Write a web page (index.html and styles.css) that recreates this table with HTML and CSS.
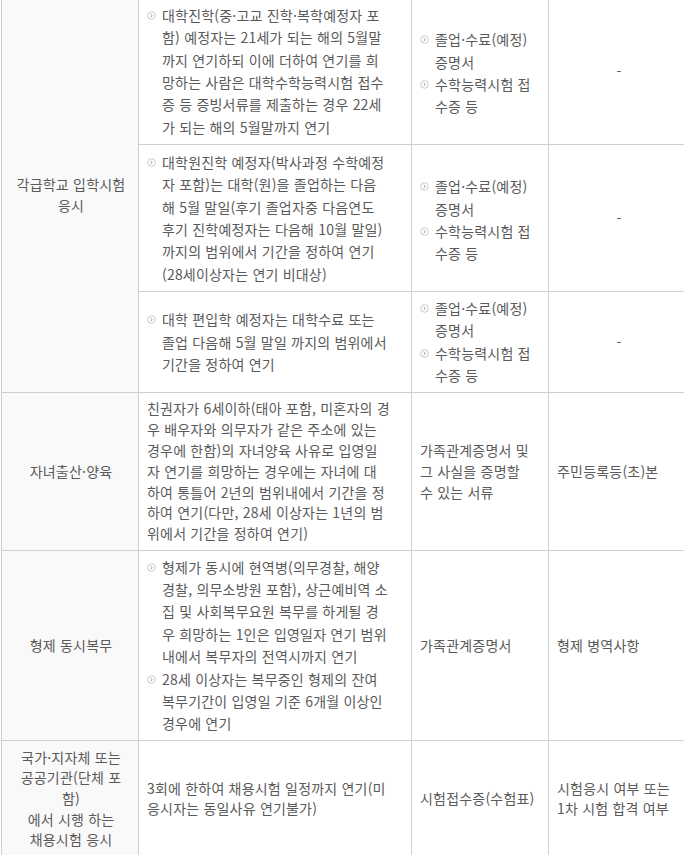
FILE: index.html
```html
<!DOCTYPE html>
<html lang="ko">
<head>
<meta charset="utf-8">
<title>입영일자 연기</title>
<link rel="stylesheet" href="styles.css">
</head>
<body>
<table class="tbl">
  <colgroup>
    <col class="c1"><col class="c2"><col class="c3"><col class="c4">
  </colgroup>
  <tbody>
    <tr class="r1">
      <th rowspan="3">각급학교 입학시험<br>응시</th>
      <td>
        <ul class="blist">
          <li><svg class="bul" viewBox="0 0 9 9"><circle cx="4.5" cy="4.5" r="3.8"/><path d="M3.7 3 L5.3 4.5 L3.7 6"/></svg>대학진학(중·고교 진학·복학예정자 포<br>함) 예정자는 21세가 되는 해의 5월말<br>까지 연기하되 이에 더하여 연기를 희<br>망하는 사람은 대학수학능력시험 접수<br>증 등 증빙서류를 제출하는 경우 22세<br>가 되는 해의 5월말까지 연기</li>
        </ul>
      </td>
      <td class="docs">
        <ul class="blist">
          <li><svg class="bul" viewBox="0 0 9 9"><circle cx="4.5" cy="4.5" r="3.8"/><path d="M3.7 3 L5.3 4.5 L3.7 6"/></svg>졸업·수료(예정)<br>증명서</li>
          <li><svg class="bul" viewBox="0 0 9 9"><circle cx="4.5" cy="4.5" r="3.8"/><path d="M3.7 3 L5.3 4.5 L3.7 6"/></svg>수학능력시험 접<br>수증 등</li>
        </ul>
      </td>
      <td class="center">-</td>
    </tr>
    <tr class="r2">
      <td>
        <ul class="blist">
          <li><svg class="bul" viewBox="0 0 9 9"><circle cx="4.5" cy="4.5" r="3.8"/><path d="M3.7 3 L5.3 4.5 L3.7 6"/></svg>대학원진학 예정자(박사과정 수학예정<br>자 포함)는 대학(원)을 졸업하는 다음<br>해 5월 말일(후기 졸업자중 다음연도<br>후기 진학예정자는 다음해 10월 말일)<br>까지의 범위에서 기간을 정하여 연기<br>(28세이상자는 연기 비대상)</li>
        </ul>
      </td>
      <td class="docs">
        <ul class="blist">
          <li><svg class="bul" viewBox="0 0 9 9"><circle cx="4.5" cy="4.5" r="3.8"/><path d="M3.7 3 L5.3 4.5 L3.7 6"/></svg>졸업·수료(예정)<br>증명서</li>
          <li><svg class="bul" viewBox="0 0 9 9"><circle cx="4.5" cy="4.5" r="3.8"/><path d="M3.7 3 L5.3 4.5 L3.7 6"/></svg>수학능력시험 접<br>수증 등</li>
        </ul>
      </td>
      <td class="center">-</td>
    </tr>
    <tr class="r3">
      <td>
        <ul class="blist">
          <li><svg class="bul" viewBox="0 0 9 9"><circle cx="4.5" cy="4.5" r="3.8"/><path d="M3.7 3 L5.3 4.5 L3.7 6"/></svg>대학 편입학 예정자는 대학수료 또는<br>졸업 다음해 5월 말일 까지의 범위에서<br>기간을 정하여 연기</li>
        </ul>
      </td>
      <td>
        <ul class="blist">
          <li><svg class="bul" viewBox="0 0 9 9"><circle cx="4.5" cy="4.5" r="3.8"/><path d="M3.7 3 L5.3 4.5 L3.7 6"/></svg>졸업·수료(예정)<br>증명서</li>
          <li><svg class="bul" viewBox="0 0 9 9"><circle cx="4.5" cy="4.5" r="3.8"/><path d="M3.7 3 L5.3 4.5 L3.7 6"/></svg>수학능력시험 접<br>수증 등</li>
        </ul>
      </td>
      <td class="center">-</td>
    </tr>
    <tr class="r4">
      <th>자녀출산·양육</th>
      <td class="plain">친권자가 6세이하(태아 포함, 미혼자의 경<br>우 배우자와 의무자가 같은 주소에 있는<br>경우에 한함)의 자녀양육 사유로 입영일<br>자 연기를 희망하는 경우에는 자녀에 대<br>하여 통틀어 2년의 범위내에서 기간을 정<br>하여 연기(다만, 28세 이상자는 1년의 범<br>위에서 기간을 정하여 연기)</td>
      <td class="plain">가족관계증명서 및<br>그 사실을 증명할<br>수 있는 서류</td>
      <td class="plain">주민등록등(초)본</td>
    </tr>
    <tr class="r5">
      <th>형제 동시복무</th>
      <td>
        <ul class="blist">
          <li><svg class="bul" viewBox="0 0 9 9"><circle cx="4.5" cy="4.5" r="3.8"/><path d="M3.7 3 L5.3 4.5 L3.7 6"/></svg>형제가 동시에 현역병(의무경찰, 해양<br>경찰, 의무소방원 포함), 상근예비역 소<br>집 및 사회복무요원 복무를 하게될 경<br>우 희망하는 1인은 입영일자 연기 범위<br>내에서 복무자의 전역시까지 연기</li>
          <li><svg class="bul" viewBox="0 0 9 9"><circle cx="4.5" cy="4.5" r="3.8"/><path d="M3.7 3 L5.3 4.5 L3.7 6"/></svg>28세 이상자는 복무중인 형제의 잔여<br>복무기간이 입영일 기준 6개월 이상인<br>경우에 연기</li>
        </ul>
      </td>
      <td class="plain">가족관계증명서</td>
      <td class="plain">형제 병역사항</td>
    </tr>
    <tr class="r6">
      <th>국가·지자체 또는<br>공공기관(단체 포<br>함)<br>에서 시행 하는<br>채용시험 응시</th>
      <td class="plain">3회에 한하여 채용시험 일정까지 연기(미<br>응시자는 동일사유 연기불가)</td>
      <td class="plain">시험접수증(수험표)</td>
      <td class="plain">시험응시 여부 또는<br>1차 시험 합격 여부</td>
    </tr>
  </tbody>
</table>
</body>
</html>
```

FILE: styles.css
```css
html, body {
  margin: 0;
  padding: 0;
  background: #ffffff;
  overflow: hidden;
}

body {
  font-family: "Noto Sans CJK KR", "Noto Sans", sans-serif;
  font-size: 14px;
  color: #5a5a5a;
  letter-spacing: 0.2px;
}

.tbl {
  border-collapse: collapse;
  table-layout: fixed;
  width: 686px;
  margin: -3px 0 0 1px;
}

.c1 { width: 137px; }
.c2 { width: 273px; }
.c3 { width: 137px; }
.c4 { width: 139px; }

.tbl th,
.tbl td {
  border: 1px solid #cfcfcf;
  padding: 5px 6px 5px 8px;
  vertical-align: middle;
  white-space: nowrap;
  text-align: left;
}

.tbl th {
  background: #f9f9f9;
  font-weight: normal;
  text-align: center;
  line-height: 20.6px;
}

.tbl td.center {
  text-align: center;
}

.tbl td.docs {
  padding-top: 9px;
}

.tbl td.plain {
  line-height: 20.8px;
}

.blist {
  list-style: none;
  margin: 0;
  padding: 0;
}

.blist li {
  line-height: 22.4px;
  padding-left: 15px;
  text-indent: -15px;
}

.bul {
  display: inline-block;
  width: 9px;
  height: 9px;
  margin-right: 6px;
  vertical-align: 1px;
  text-indent: 0;
}

.bul circle {
  fill: #ffffff;
  stroke: #c4c4c4;
  stroke-width: 0.9;
}

.bul path {
  fill: none;
  stroke: #8a8a8a;
  stroke-width: 0.9;
}

.r1 { height: 147px; }
.r2 { height: 147px; }
.r3 { height: 99px; }
.r4 { height: 158px; }
.r5 { height: 188px; }
.r6 { height: 116px; }
```
